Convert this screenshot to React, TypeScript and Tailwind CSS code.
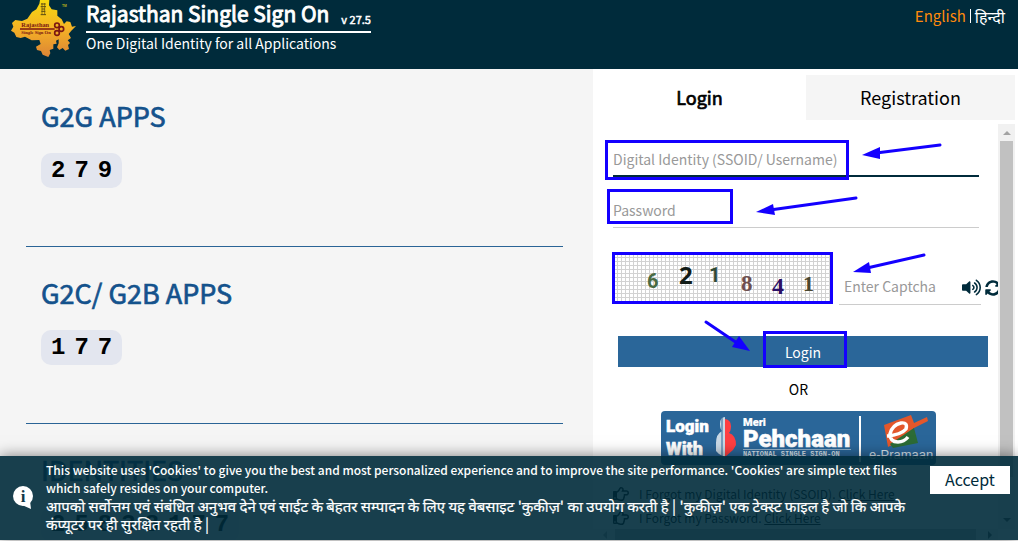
import type { ReactNode } from "react";
import { FaRegHandPointRight, FaSyncAlt, FaVolumeUp } from "react-icons/fa";

function MapLogo() {
  return (
    <svg viewBox="0 0 240 180" className="h-[60px] w-20 shrink-0" aria-hidden="true">
      <defs>
        <linearGradient id="sand" x1="0" y1="0" x2="0" y2="1">
          <stop offset="0" stopColor="#f6d90f" />
          <stop offset="0.5" stopColor="#f5b225" />
          <stop offset="1" stopColor="#dc8436" />
        </linearGradient>
      </defs>
      <path
        fill="url(#sand)"
        d="M120 0 118 11 109 28 96 36 82 56 66 63 46 60 36 69 40 80 33 92 43 98 49 111 62 114 75 110 95 121 118 120 122 132 108 140 111 150 123 153 128 164 145 171 151 160 149 150 160 146 160 133 170 131 168 122 176 118 176 130 171 142 178 150 188 144 196 152 207 147 204 135 210 129 203 121 213 114 206 102 214 92 228 78 216 80 211 66 200 64 192 72 185 58 172 47 172 31 155 28 147 16 148 0Z"
      />
      <g fill="none" stroke="#5c4b12" strokeWidth="3">
        <path d="M123 12h14M122 20h16M125 27h10M124 34h12M122 44h16" />
        <path d="M126 9v35M134 9v35" strokeWidth="2" />
      </g>
      <g fill="none" stroke="#7b1712" strokeWidth="5">
        <path d="M60 87h104" />
        <circle cx="171" cy="76" r="7" />
        <circle cx="184" cy="87" r="7" />
        <circle cx="171" cy="99" r="7" />
      </g>
      <g fill="#7b1712" fontFamily="Liberation Serif, serif" fontWeight="700">
        <text x="64" y="81" fontSize="19">Rajasthan</text>
        <text x="64" y="102" fontSize="14">Single Sign On</text>
      </g>
      <text x="186" y="22" fontSize="10" fontWeight="700" fill="#b9b01b" fontFamily="Liberation Sans, sans-serif">TM</text>
    </svg>
  );
}

function AppCount({ title, digits }: { title: string; digits: string }) {
  return (
    <section className="h-[177px] shrink-0 border-b border-[#2a6496] px-[15px] pt-[30px]">
      <h2 className="text-[27px] leading-8 font-normal text-[#14528c] [-webkit-text-stroke:0.7px_#14528c]">{title}</h2>
      <div className="mt-[21px] inline-flex h-[35px] items-center gap-[9px] rounded-[10px] bg-[#e3e6ef] px-2.5 font-['Liberation_Mono',monospace] text-2xl font-bold text-black">
        {digits.split("").map((d, i) => (
          <span key={i}>{d}</span>
        ))}
      </div>
    </section>
  );
}

function Mark({ className }: { className: string }) {
  return <span className={`pointer-events-none absolute border-[3px] border-[#1400ff] ${className}`} />;
}

function Arrow({ className, box, line, head }: { className: string; box: string; line: string; head: string }) {
  return (
    <svg className={`pointer-events-none absolute ${className}`} viewBox={box} aria-hidden="true">
      <path d={line} stroke="#1400ff" strokeWidth="3" strokeLinecap="round" />
      <path d={head} fill="#1400ff" />
    </svg>
  );
}

function Captcha() {
  return (
    <svg viewBox="0 0 220 50" className="h-[50px] w-[220px] shrink-0" role="img" aria-label="Captcha">
      <defs>
        <pattern id="mesh" width="4" height="4" patternUnits="userSpaceOnUse">
          <path d="M0 .5h4M.5 0v4" stroke="#d2d2d2" />
        </pattern>
      </defs>
      <rect width="220" height="50" fill="#fff" />
      <rect width="220" height="50" fill="url(#mesh)" />
      <g fontWeight="700" fontFamily="Roboto, sans-serif">
        <text x="34" y="35" fontSize="20" fill="#4a6b43">6</text>
        <text x="66" y="31" fontSize="24" fill="#111b16" fontFamily="Open Sans, sans-serif">2</text>
        <text x="96" y="29" fontSize="20" fill="#2f4a35">1</text>
      </g>
      <g fontWeight="700" fontFamily="Liberation Serif, serif">
        <text x="128" y="38" fontSize="23" fill="#6e5050">8</text>
        <text x="159" y="41" fontSize="24" fill="#2b0f66">4</text>
        <text x="190" y="38" fontSize="22" fill="#4a4630">1</text>
      </g>
    </svg>
  );
}

function PehchaanButton() {
  return (
    <button type="button" className="mx-auto mt-2.5 block h-[54px] w-[275px] overflow-hidden rounded bg-[#2a6699]">
      <svg viewBox="0 0 275 54" className="h-full w-full">
        <g fill="#fff" stroke="#fff" strokeWidth=".5" fontFamily="Roboto, sans-serif" fontWeight="900">
          <text x="5" y="21" fontSize="17">Login</text>
          <text x="5" y="44" fontSize="18">With</text>
          <text x="82" y="15" fontSize="11" strokeWidth=".2">Meri</text>
          <text x="82" y="36" fontSize="24">Pehchaan</text>
        </g>
        <path d="M64 6q-5 0-5 7 0 5 2 7-6 3-6 12v8l3 3 6 3Z" fill="#c9d9e6" />
        <path d="M64 8q6 1 6 7 0 5-2 7 7 2 7 12l-3 5-8 7Z" fill="#ff3f42" />
        <path d="M61 6v40" stroke="#2a6699" />
        <path d="M82 38.5h108" stroke="#8fb0cb" />
        <text x="82" y="45" fontSize="7" fontWeight="700" fontFamily="Liberation Mono, monospace" fill="#dbe6ef">NATIONAL SINGLE SIGN-ON</text>
        <path d="M199 5v46" stroke="#fff" strokeWidth="2" />
        <path d="M223 14 250 4l3 8 13-6 1 4-14 7-22 17-4 2Z" fill="#e3572b" />
        <path d="m229 33 24-16 4 15-25 5Z" fill="#2c6b35" />
        <path d="M226 25q14-1 19-7 2-7-5-6-9 2-11 11 0 8 8 8 6 0 10-5" fill="none" stroke="#fff" strokeWidth="3.5" />
        <text x="208" y="48" fontSize="13" fill="#dbe6ef" fontFamily="Liberation Sans, sans-serif">e-Pramaan</text>
      </svg>
    </button>
  );
}

function ForgotRow({ children }: { children: ReactNode }) {
  return (
    <p className="flex h-6 items-center gap-2.5 whitespace-nowrap text-xs text-black">
      <FaRegHandPointRight className="text-base" />
      <span>
        {children}{" "}
        <a href="#" className="underline">Click Here</a>
      </span>
    </p>
  );
}

const field = "w-full bg-transparent text-sm text-black placeholder:text-[#999] outline-none";

export default function App() {
  return (
    <div className="relative flex h-screen flex-col overflow-hidden bg-white pb-px font-['Noto_Sans_CJK_SC','Noto_Sans',sans-serif]">
      <header className="flex h-[69px] shrink-0 items-start justify-between bg-[#002b3b] pr-[13px] text-white">
        <div className="flex">
          <MapLogo />
          <div className="ml-1.5">
            <h1 className="flex h-[33px] items-end gap-3 border-b-2 border-white pb-0.5 text-[21px] leading-8 font-normal [-webkit-text-stroke:0.9px_white]">
              Rajasthan Single Sign On
              <small className="text-[11px] leading-5 [-webkit-text-stroke:0.5px_white]">v 27.5</small>
            </h1>
            <p className="text-sm leading-5">One Digital Identity for all Applications</p>
          </div>
        </div>
        <nav className="flex items-center gap-1 pt-1 text-[15px] leading-6">
          <a href="#" className="text-[#ff8a0c]">English</a>
          <span className="h-3.5 w-px bg-white" />
          <a href="#" lang="hi" className="text-base leading-6">हिन्दी</a>
        </nav>
      </header>

      <main className="grid min-h-0 flex-1 grid-cols-[minmax(0,593fr)_minmax(0,425fr)] grid-rows-[minmax(0,1fr)]">
        <div className="flex flex-col overflow-hidden bg-[#f5f5f5] pt-px pr-[30px] pl-[26px]">
          <AppCount title="G2G APPS" digits="279" />
          <AppCount title="G2C/ G2B APPS" digits="177" />
          <AppCount title="IDENTITIES" digits="25838177" />
        </div>

        <div className="flex min-h-0 flex-col pt-1.5 pr-[3px]">
          <div role="tablist" className="grid h-[45px] shrink-0 grid-cols-[213fr_209fr] text-lg text-black">
            <button role="tab" aria-selected="true" className="pb-0.5 [-webkit-text-stroke:0.7px_black]">Login</button>
            <button role="tab" aria-selected="false" className="bg-[#f5f5f5] pb-0.5">Registration</button>
          </div>

          <div className="mt-1 flex min-h-0 flex-1">
            <div className="flex min-w-0 flex-1 flex-col overflow-hidden">
              <form className="flex min-h-0 flex-1 flex-col overflow-hidden pt-5 pl-5">
                <div className="relative mr-[19px] shrink-0">
                  <input aria-label="Digital Identity" placeholder="Digital Identity (SSOID/ Username)" className={`${field} h-[33px] border-b-2 border-[#002b3b] pb-0.5`} />
                  <Mark className="-top-1 -left-2 h-10 w-[244px]" />
                  <Arrow className="-top-1 left-[249px] h-5 w-20" box="0 0 80 20" line="M78 5 14 13" head="M0 15 18 7 18 19Z" />
                </div>
                <div className="relative mt-[18px] mr-[19px] shrink-0">
                  <input type="password" aria-label="Password" placeholder="Password" className={`${field} h-[33px] border-b border-[#ccc] pb-0.5`} />
                  <Mark className="-top-1.5 -left-1.5 h-[35px] w-[126px]" />
                  <Arrow className="top-0 left-[143px] h-5 w-[104px]" box="0 0 104 20" line="M100 3 14 15" head="M0 17 17 9 19 20Z" />
                </div>
                <div className="relative mt-[25px] flex shrink-0 items-start">
                  <Captcha />
                  <div className="mt-[17px] ml-1.5 flex h-[35px] w-[142px] shrink-0 items-center border-b border-[#ccc] pl-[5px]">
                    <input aria-label="Enter Captcha" placeholder="Enter Captcha" className={`${field} pb-0.5`} />
                    <button type="button" aria-label="Play captcha" className="text-[#002b3b]">
                      <FaVolumeUp className="text-[19px]" />
                    </button>
                  </div>
                  <button type="button" aria-label="Refresh captcha" className="mt-[27px] ml-1 shrink-0 text-[#002b3b]">
                    <FaSyncAlt className="text-base" />
                  </button>
                  <Mark className="-top-px -left-px h-[52px] w-[221px]" />
                  <Arrow className="top-0 left-[240px] h-5 w-[74px]" box="0 0 74 20" line="M71 2 14 15" head="M0 19 16 9 18 20Z" />
                </div>
                <div className="relative mt-[31px] mr-2.5 ml-[5px] shrink-0">
                  <button type="submit" className="block h-[31px] w-full bg-[#2a6699] text-sm text-white">Login</button>
                  <Mark className="-top-[5px] left-[145px] h-[37px] w-[84px]" />
                  <Arrow className="-top-[17px] left-[85px] h-[34px] w-12" box="0 0 48 34" line="M3 3 34 24" head="M47 32 29 28 36 17Z" />
                </div>
                <p className="mt-2.5 mr-3.5 shrink-0 text-center text-sm leading-6 text-black">OR</p>
                <div className="mr-3.5 shrink-0">
                  <PehchaanButton />
                </div>
                <div className="mt-[17px] shrink-0">
                  <ForgotRow>I Forgot my Digital Identity (SSOID).</ForgotRow>
                  <ForgotRow>I Forgot my Password.</ForgotRow>
                </div>
              </form>
              <div className="flex h-[11px] shrink-0 items-center bg-[#f1f1f1] pr-1.5 pl-2.5">
                <span className="border-y-4 border-r-4 border-y-transparent border-r-[#a3a3a3]" />
                <span className="mr-3 ml-2 h-full flex-1 bg-[#c1c1c1]" />
                <span className="border-y-4 border-l-4 border-y-transparent border-l-[#505050]" />
              </div>
            </div>
            <div className="mb-[11px] flex w-[17px] shrink-0 flex-col items-center bg-[#f1f1f1] py-[7px]">
              <span className="border-x-4 border-b-4 border-x-transparent border-b-[#a3a3a3]" />
              <span className="my-1.5 w-[13px] flex-[335] bg-[#c1c1c1]" />
              <span className="flex-[35]" />
              <span className="border-x-4 border-t-4 border-x-transparent border-t-[#505050]" />
            </div>
          </div>
        </div>
      </main>

      <aside className="absolute inset-x-0 bottom-px flex h-[84px] items-start bg-[#002b3b]/90 pr-2 pl-[13px] text-white shadow-[0_0_14px_rgba(0,0,0,0.5)]">
        <svg viewBox="0 0 20 24" className="mt-[30px] h-6 w-5 shrink-0" aria-hidden="true">
          <circle cx="10" cy="10" r="10" fill="#fff" />
          <path d="m9 19 9 4-1-8Z" fill="#fff" />
          <text x="10" y="16" textAnchor="middle" fontSize="17" fontWeight="700" fontFamily="Liberation Serif, serif" fill="#123848">i</text>
        </svg>
        <div className="ml-[13px] min-w-0 flex-1 pt-[5px] pr-3 text-xs leading-[18px] font-medium">
          <p>
            This website uses 'Cookies' to give you the best and most personalized experience and to improve the site performance. 'Cookies' are simple text files which safely resides on your computer.
          </p>
          <p lang="hi" className="text-[15px] leading-[18px] font-normal [-webkit-text-stroke:0.2px_white]">
            आपको सर्वोत्तम एवं संबंधित अनुभव देने एवं साईट के बेहतर सम्पादन के लिए यह वेबसाइट 'कुकीज़' का उपयोग करती है | 'कुकीज़' एक टेक्स्ट फाइल है जो कि आपके कंप्यूटर पर ही सुरक्षित रहती है |
          </p>
        </div>
        <button type="button" className="mt-2.5 h-7 w-20 shrink-0 bg-white pb-0.5 text-base text-[#002b3b]">Accept</button>
      </aside>
    </div>
  );
}
